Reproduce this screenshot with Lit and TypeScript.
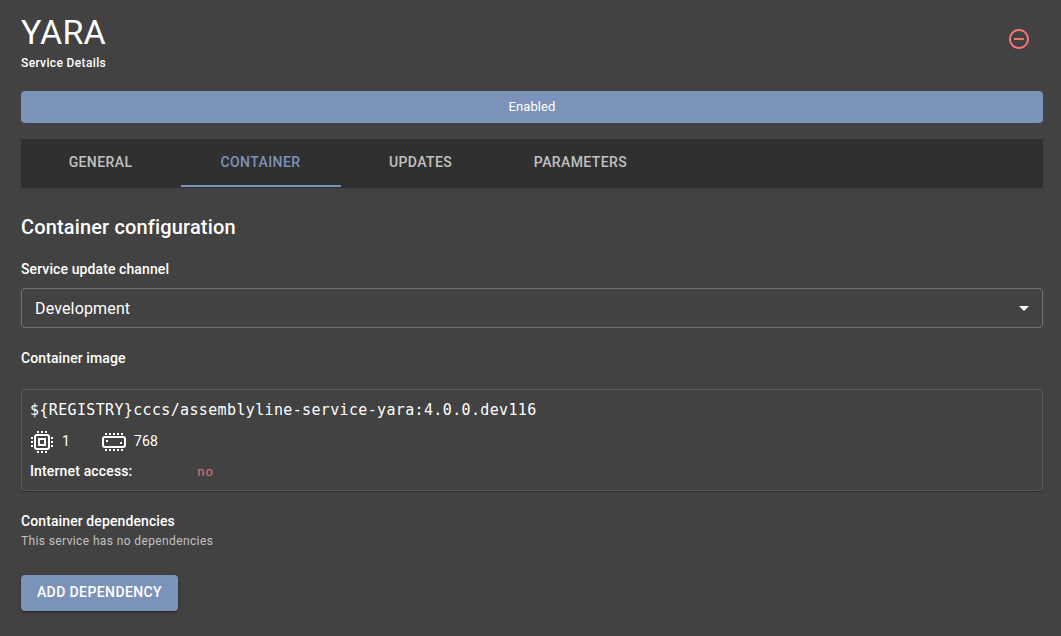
import { LitElement, html, css, svg } from "lit";
import { customElement, state } from "lit/decorators.js";

const TABS = ["General", "Container", "Updates", "Parameters"];

const pins = (xs: number[], ys: number[]) =>
  xs.flatMap((x) => ys.map((y) => svg`<rect x=${x} y=${y} width="2" height="2" />`));

@customElement("app-root")
export class AppRoot extends LitElement {
  @state() private active = "Container";

  static styles = css`
    :host {
      display: block;
      box-sizing: border-box;
      height: 636px;
      padding: 11px 18px 0 21px;
      background: #424242;
      color: #fff;
      font-family: Roboto, sans-serif;
      overflow: hidden;
    }
    * { box-sizing: border-box; }
    h1, h2, h3, p { margin: 0; }
    header { display: flex; justify-content: space-between; height: 64px; }
    h1 { font-weight: 400; font-size: 34px; line-height: 42px; letter-spacing: 0.2px; }
    .caption { font-size: 12px; line-height: 20px; letter-spacing: 0.36px; font-weight: 500; }
    .remove { width: 24px; height: 24px; margin: 16px 12px 0 0; fill: #f27474; }
    button { font-family: inherit; border: 0; margin: 0; padding: 0; color: #fff; }
    .enabled {
      display: block; width: 100%; height: 32px; margin-top: 16px; padding-bottom: 2px;
      border-radius: 4px; background: #7c93b9;
      font-size: 13px; font-weight: 400; letter-spacing: 0.1px;
    }
    .tabs {
      display: flex; height: 48px; margin-top: 16px; background: #303030;
      box-shadow: 0 1px 1px #303030;
    }
    .tab {
      width: 160px; height: 48px; padding-right: 1px; background: none; color: #c1c1c1;
      font-size: 14px; font-weight: 500; letter-spacing: 0.4px;
      text-transform: uppercase; border-bottom: 2px solid transparent;
    }
    .tab.on { color: #7c93b9; border-color: #7c93b9; }
    h2 { margin-top: 24px; font-size: 20px; line-height: 32px; font-weight: 500; letter-spacing: 0.15px; }
    h3 { font-size: 14px; line-height: 22px; font-weight: 500; letter-spacing: 0.1px; }
    .channel { margin-top: 15px; }
    .select {
      display: flex; align-items: center; justify-content: space-between;
      height: 40px; margin-top: 8px; padding: 0 6px 0 13px;
      border: 1px solid #717171; border-radius: 4px;
      font-size: 16px; letter-spacing: 0.15px;
    }
    .select svg { width: 24px; height: 24px; fill: #fff; }
    .image { margin-top: 19px; }
    .card {
      height: 102px; margin-top: 20px; padding: 8px; border: 1px solid #5a5a5a;
      border-radius: 4px; box-shadow: 0 1px 1px rgba(0, 0, 0, 0.3);
    }
    .name { font: 15px/24px "DejaVu Sans Mono", monospace; letter-spacing: 0.35px; }
    .specs { display: flex; align-items: center; height: 24px; margin-top: 8px; font-size: 14px; letter-spacing: 0.15px; }
    .specs svg { width: 24px; height: 24px; fill: #fff; margin-right: 8px; }
    .cpu, .ram { display: flex; align-items: center; }
    .cpu { width: 72px; }
    .value { padding-bottom: 2px; }
    .access { display: flex; height: 22px; margin-top: 6px; }
    .access h3 { width: 167px; letter-spacing: 0.15px; }
    .no { font: 13px/24px "DejaVu Sans Mono", monospace; letter-spacing: 0.3px; color: #e57373; }
    .deps { margin-top: 19px; }
    .none { font-size: 12px; line-height: 18px; letter-spacing: 0.38px; color: #c1c1c1; }
    .add {
      display: block; width: 157px; height: 36px; margin-top: 25px; padding-bottom: 2px;
      border-radius: 4px; background: #7c93b9;
      font-size: 14px; font-weight: 500; letter-spacing: 0.4px; text-transform: uppercase;
      box-shadow: 0 3px 1px -2px rgba(0,0,0,.2), 0 2px 2px rgba(0,0,0,.14), 0 1px 5px rgba(0,0,0,.12);
    }
  `;

  render() {
    return html`
      <header>
        <div>
          <h1>YARA</h1>
          <p class="caption">Service Details</p>
        </div>
        <svg class="remove" viewBox="0 0 24 24">
          <path d="M7 11v2h10v-2H7zm5-9C6.48 2 2 6.48 2 12s4.48 10 10 10 10-4.48 10-10S17.52 2 12 2zm0 18c-4.41 0-8-3.59-8-8s3.59-8 8-8 8 3.59 8 8-3.59 8-8 8z" />
        </svg>
      </header>
      <button class="enabled">Enabled</button>
      <nav class="tabs">
        ${TABS.map((t) => html`<button class="tab ${t === this.active ? "on" : ""}" @click=${() => (this.active = t)}>${t}</button>`)}
      </nav>
      <h2>Container configuration</h2>
      <h3 class="channel">Service update channel</h3>
      <div class="select">
        <span>Development</span>
        <svg viewBox="0 0 24 24"><path d="M7 10l5 5 5-5z" /></svg>
      </div>
      <h3 class="image">Container image</h3>
      <section class="card">
        <p class="name">\${REGISTRY}cccs/assemblyline-service-yara:4.0.0.dev116</p>
        <div class="specs">
          <span class="cpu">
            <svg viewBox="0 0 24 24">
              ${pins([7, 11, 15], [1, 21])}${pins([1, 21], [7, 11, 15])}
              <rect x="5" y="5" width="14" height="14" rx="2" fill="none" stroke="#fff" stroke-width="2" />
              <rect x="9" y="9" width="6" height="6" fill="none" stroke="#fff" stroke-width="2" />
            </svg><span class="value">1</span>
          </span>
          <span class="ram">
            <svg viewBox="0 0 24 24">
              ${pins([3, 7, 11, 15, 19], [3, 19])}
              <rect x="1" y="7" width="22" height="10" rx="2" fill="none" stroke="#fff" stroke-width="2" />
              <rect x="4" y="10" width="2" height="2" /><rect x="18" y="12" width="2" height="2" />
            </svg><span class="value">768</span>
          </span>
        </div>
        <div class="access"><h3>Internet access:</h3><span class="no">no</span></div>
      </section>
      <h3 class="deps">Container dependencies</h3>
      <p class="none">This service has no dependencies</p>
      <button class="add">Add dependency</button>
    `;
  }
}
